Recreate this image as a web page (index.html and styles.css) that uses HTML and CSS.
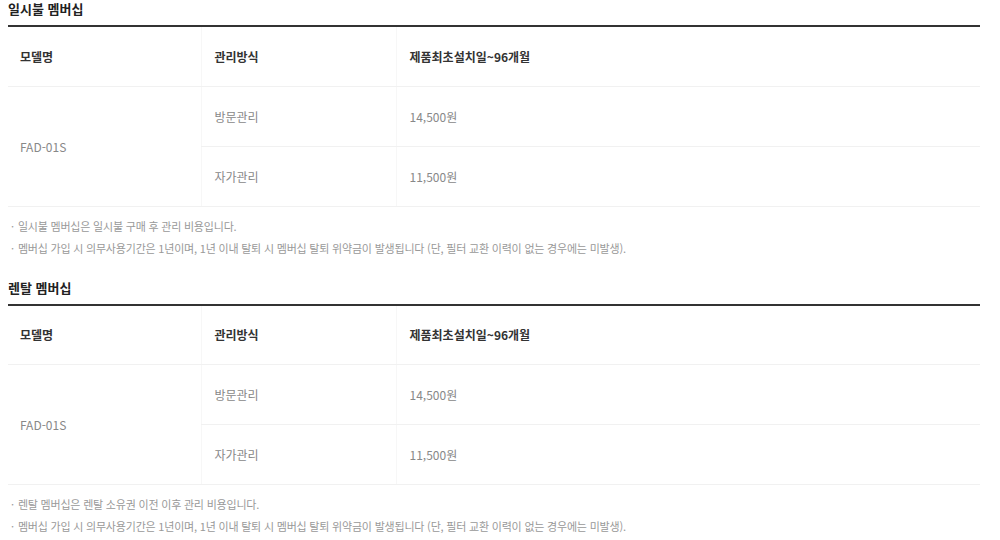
FILE: index.html
```html
<!DOCTYPE html>
<html lang="ko">
<head>
    <meta charset="UTF-8">
    <title>멤버십 요금</title>
    <link rel="stylesheet" href="styles.css">
</head>
<body>

    <!-- 일시불 멤버십 -->
    <section class="membership">
        <h3 class="membership-title">일시불 멤버십</h3>
        <table class="price-table">
            <colgroup>
                <col class="col-model">
                <col class="col-type">
                <col>
            </colgroup>
            <thead>
                <tr>
                    <th>모델명</th>
                    <th>관리방식</th>
                    <th>제품최초설치일~96개월</th>
                </tr>
            </thead>
            <tbody>
                <tr>
                    <td rowspan="2">FAD-01S</td>
                    <td>방문관리</td>
                    <td>14,500원</td>
                </tr>
                <tr>
                    <td>자가관리</td>
                    <td>11,500원</td>
                </tr>
            </tbody>
        </table>
        <ul class="notes">
            <li>일시불 멤버십은 일시불 구매 후 관리 비용입니다.</li>
            <li>멤버십 가입 시 의무사용기간은 1년이며, 1년 이내 탈퇴 시 멤버십 탈퇴 위약금이 발생됩니다 (단, 필터 교환 이력이 없는 경우에는 미발생).</li>
        </ul>
    </section>

    <!-- 렌탈 멤버십 -->
    <section class="membership">
        <h3 class="membership-title">렌탈 멤버십</h3>
        <table class="price-table">
            <colgroup>
                <col class="col-model">
                <col class="col-type">
                <col>
            </colgroup>
            <thead>
                <tr>
                    <th>모델명</th>
                    <th>관리방식</th>
                    <th>제품최초설치일~96개월</th>
                </tr>
            </thead>
            <tbody>
                <tr>
                    <td rowspan="2">FAD-01S</td>
                    <td>방문관리</td>
                    <td>14,500원</td>
                </tr>
                <tr>
                    <td>자가관리</td>
                    <td>11,500원</td>
                </tr>
            </tbody>
        </table>
        <ul class="notes">
            <li>렌탈 멤버십은 렌탈 소유권 이전 이후 관리 비용입니다.</li>
            <li>멤버십 가입 시 의무사용기간은 1년이며, 1년 이내 탈퇴 시 멤버십 탈퇴 위약금이 발생됩니다 (단, 필터 교환 이력이 없는 경우에는 미발생).</li>
        </ul>
    </section>

</body>
</html>
```

FILE: styles.css
```css
/* Reset */
* {
    margin: 0;
    padding: 0;
    box-sizing: border-box;
}

body {
    font-family: "Noto Sans CJK KR", "Noto Sans", sans-serif;
    color: #333;
    background-color: #fff;
    padding: 0 20px 0 8px;
}

/* Section */
.membership {
    margin-bottom: 20px;
}

.membership-title {
    font-size: 13px;
    font-weight: 700;
    line-height: 18px;
    color: #222;
    margin-bottom: 7px;
}

/* Price table */
.price-table {
    width: 972px;
    border-collapse: collapse;
    border-top: 2px solid #333;
    table-layout: fixed;
}

.price-table .col-model {
    width: 193px;
}

.price-table .col-type {
    width: 195px;
}

.price-table th,
.price-table td {
    height: 60px;
    padding: 0 12px 0 13px;
    text-align: left;
    vertical-align: middle;
    font-size: 12px;
    border-bottom: 1px solid #f1f1f1;
    border-left: 1px solid #f7f7f7;
}

.price-table th:first-child,
.price-table td[rowspan] {
    border-left: none;
    padding-left: 12px;
}

.price-table th {
    font-weight: 700;
    color: #333;
}

.price-table td {
    color: #888;
}

/* Notes below the table */
.notes {
    list-style: none;
    margin-top: 8px;
    padding-left: 3px;
}

.notes li {
    font-size: 11px;
    line-height: 22px;
    color: #999;
    letter-spacing: -0.2px;
}

.notes li::before {
    content: "·";
    margin-right: 4px;
}
```
